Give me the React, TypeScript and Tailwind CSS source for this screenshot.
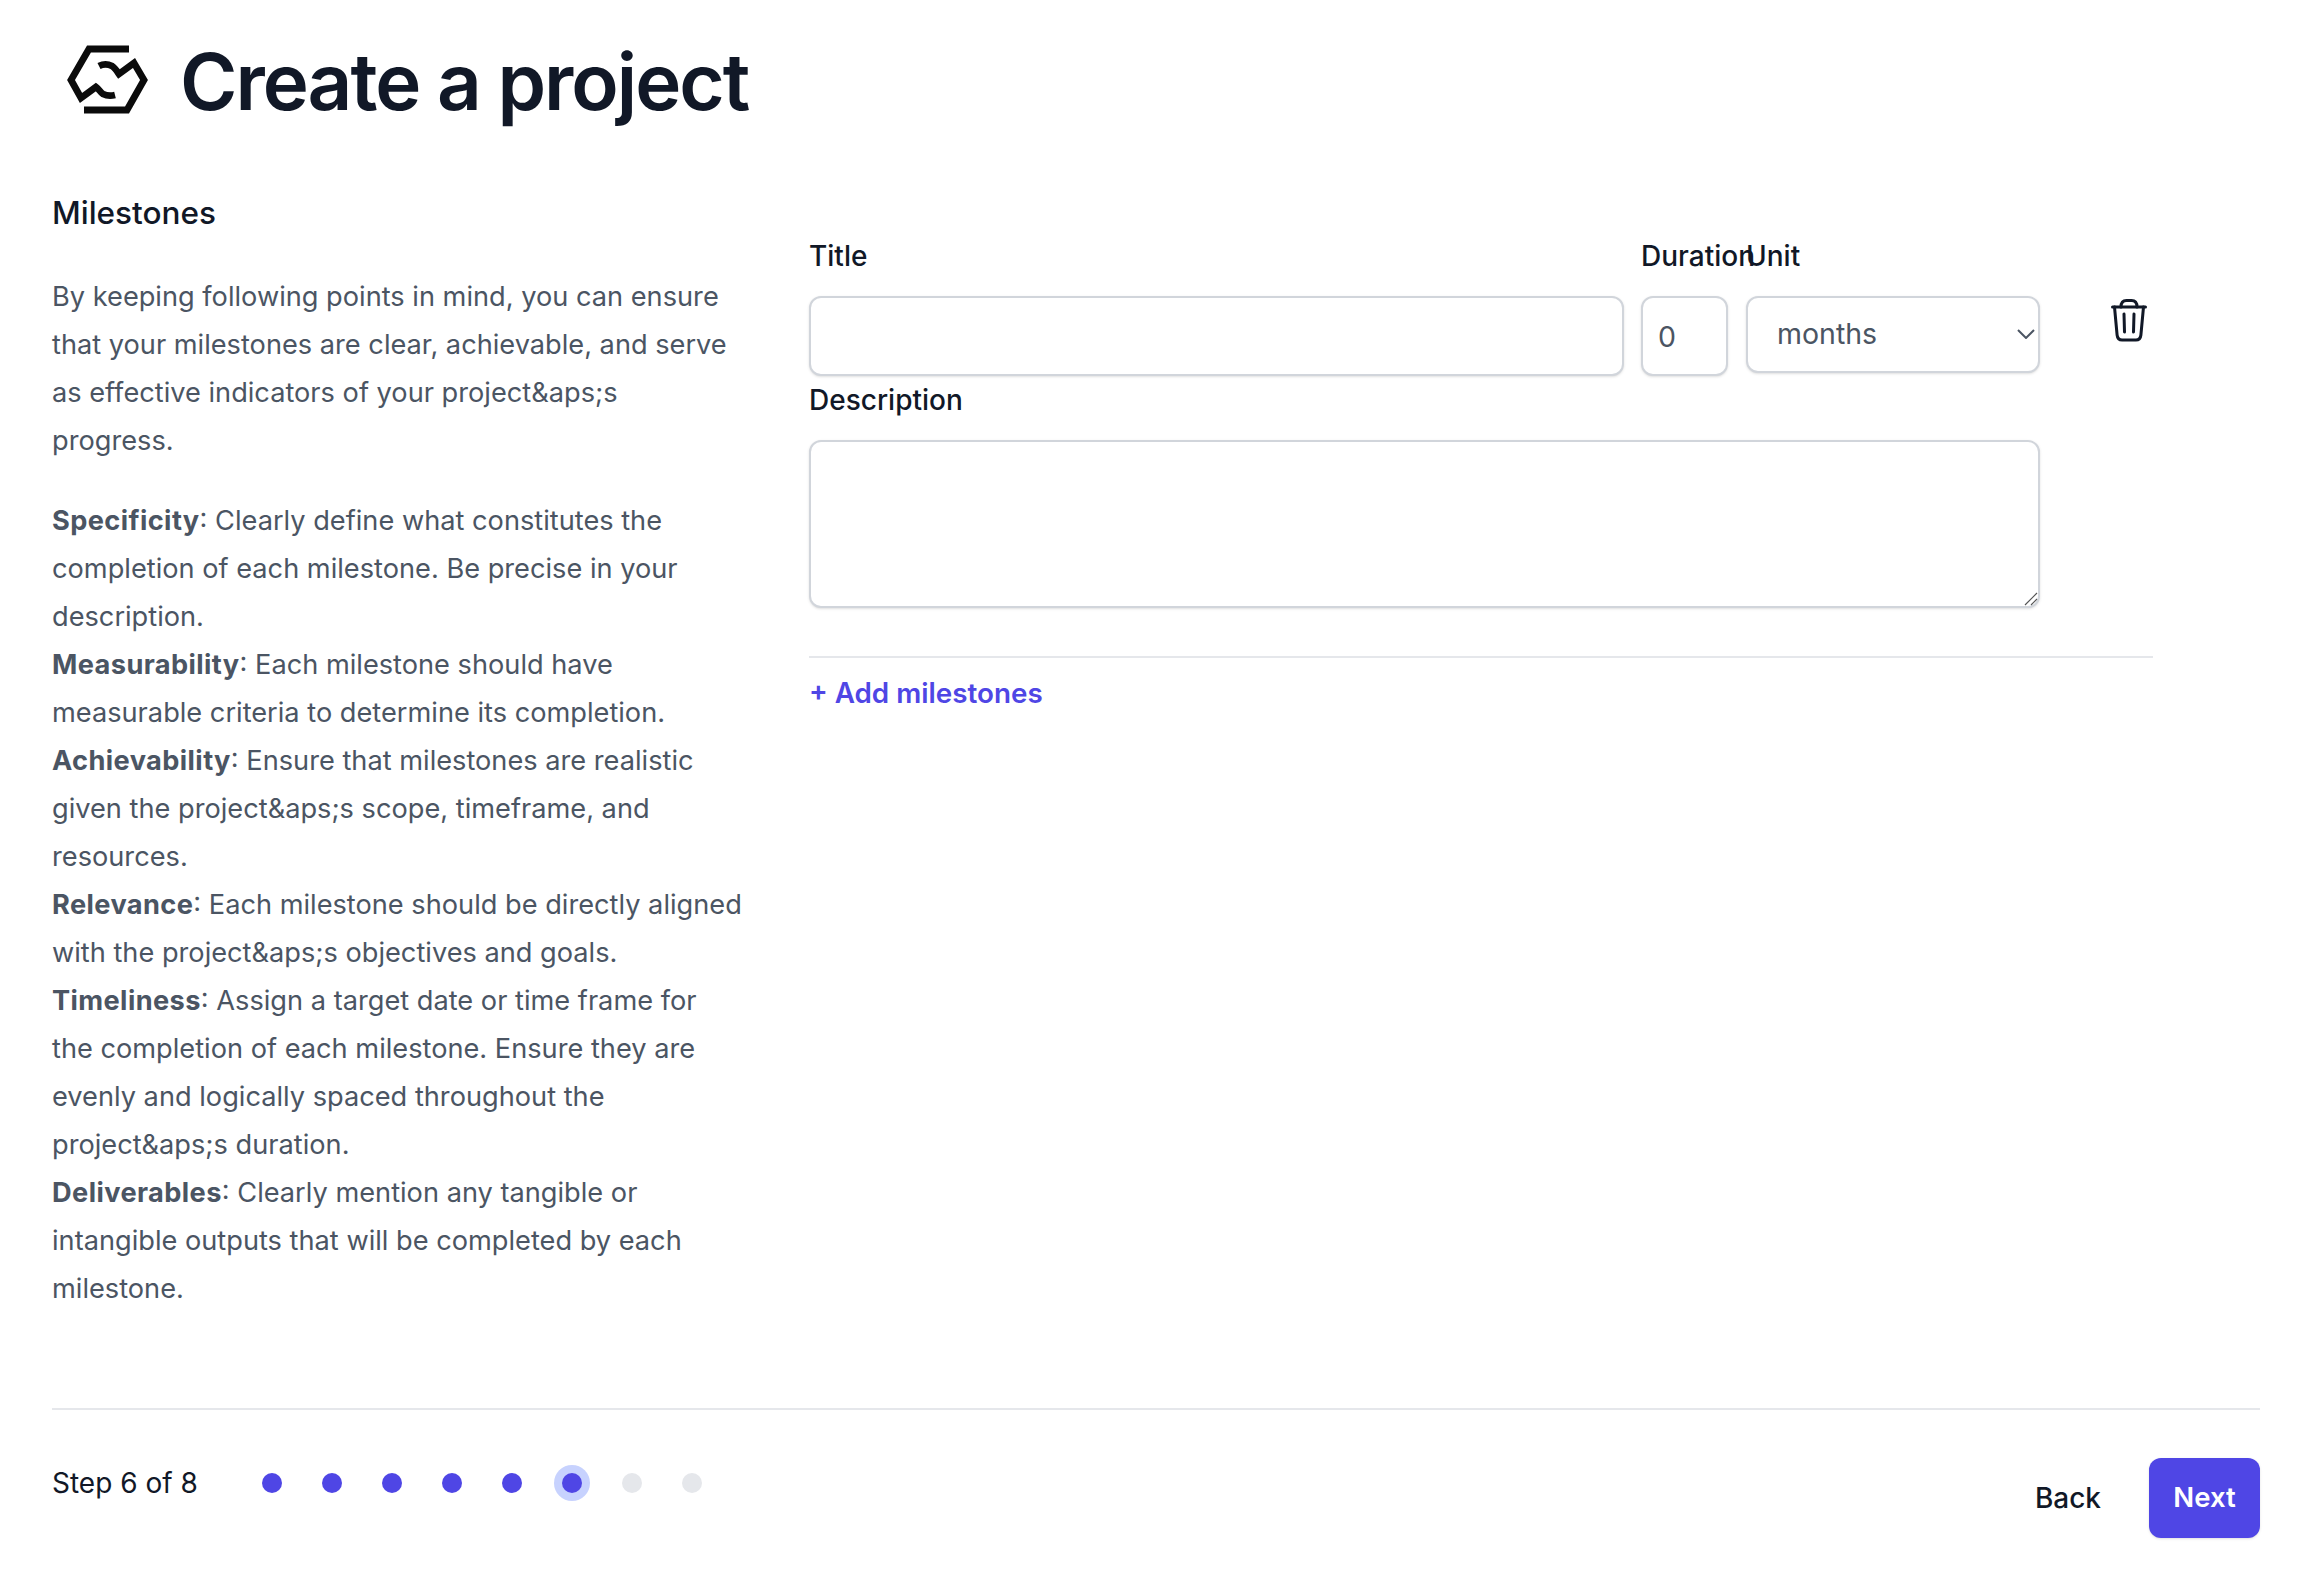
const font = { fontFamily: 'Inter, sans-serif' }

function Logo() {
  return (
    <svg viewBox="0 0 120 100" className="w-[120px] h-[100px] shrink-0">
      <g fill="none" stroke="#0b0b0b" strokeWidth="6.8">
        <path d="M80 24H40L22 55l10 18 15-11c3 2 4 5 7 7 4 2 8 2 12 1" />
        <path d="M50 41c4-2 9-2 13 0 3 2 5 5 7 8l15-11 10 17-17 30H35" />
      </g>
    </svg>
  )
}

function TrashIcon() {
  return (
    <svg viewBox="0 0 36 43" fill="none" stroke="#111827" strokeWidth="3" strokeLinecap="round" strokeLinejoin="round" className="w-[36px] h-[43px]">
      <path d="M1.5 8h33" />
      <path d="M3.5 8l2.6 28c.3 3 2 5 5 5h13.800c3 0 4.700-2 5-5l2.600-28" />
      <path d="M10 8c0-4 2-6.500 5.500-6.500h5c3.500 0 5.500 2.500 5.500 6.500" />
      <path d="M13 15l.5 18M23 15l-.5 18" />
    </svg>
  )
}

function Dot({ state }: { state: 'done' | 'current' | 'todo' }) {
  if (state === 'current') {
    return (
      <div className="w-5 h-5 rounded-full bg-[#4f46e5] ring-8 ring-[#c7d2fe]" />
    )
  }
  return (
    <div className={state === 'done' ? 'w-5 h-5 rounded-full bg-[#4f46e5]' : 'w-5 h-5 rounded-full bg-[#e5e7eb]'} />
  )
}

export default function App() {
  const inputCls =
    'block h-[80px] rounded-[12px] border-2 border-[#d1d5db] bg-white shadow-sm outline-none text-[28.5px] text-[#4b5563]'
  const boldCls = 'font-bold tracking-[0.4px]'

  return (
    <div style={font} className="w-[2308px] h-[1578px] bg-white text-[#111827] flex flex-col overflow-hidden">
      <header className="flex items-center h-[120px] pl-[49px] pt-[30px] gap-[11px]">
        <Logo />
        <h1 className="text-[78px] font-semibold leading-none tracking-[-2px] mt-[14px]">Create a project</h1>
      </header>

      <main className="flex flex-1 pl-[52px] pt-[72px]">
        <aside className="w-[694px] shrink-0">
          <h2 className="text-[31.5px] font-medium leading-[42px]">Milestones</h2>
          <div className="mt-[39px] text-[27.2px] leading-[48px] text-[#4b5563]">
            <p className="mb-[32px]">
              By keeping following points in mind, you can ensure that your milestones are clear, achievable, and serve as effective indicators of your project&amp;aps;s progress.
            </p>
            <p><b className={boldCls}>Specificity</b>: Clearly define what constitutes the completion of each milestone. Be precise in your description.</p>
            <p><b className={boldCls}>Measurability</b>: Each milestone should have measurable criteria to determine its completion.</p>
            <p><b className={boldCls}>Achievability</b>: Ensure that milestones are realistic given the project&amp;aps;s scope, timeframe, and resources.</p>
            <p><b className={boldCls}>Relevance</b>: Each milestone should be directly aligned with the project&amp;aps;s objectives and goals.</p>
            <p><b className={boldCls}>Timeliness</b>: Assign a target date or time frame for<br />the completion of each milestone. Ensure they are evenly and logically spaced throughout the project&amp;aps;s duration.</p>
            <p><b className={boldCls}>Deliverables</b>: Clearly mention any tangible or intangible outputs that will be completed by each milestone.</p>
          </div>
        </aside>

        <section className="w-[1344px] ml-[63px] pt-[46px]">
          <div className="flex border-b-2 border-[#e5e7eb] pb-[48px]">
            <div className="w-[1231px] shrink-0 text-[28px] font-medium">
              <div className="flex">
                <label className="w-[815px] mr-[17px]">
                  <div className="leading-[36px] mb-[22px]">Title</div>
                  <input className={`${inputCls} w-full`} />
                </label>
                <label className="w-[87px] mr-[18px]">
                  <div className="leading-[36px] mb-[22px] whitespace-nowrap">Duration</div>
                  <input className={`${inputCls} w-full px-[15px] font-normal`} defaultValue="0" />
                </label>
                <label className="w-[294px]">
                  <div className="leading-[36px] mb-[22px]">Unit</div>
                  <div className="relative">
                    <select className={`${inputCls} !h-[77px] w-full appearance-none pl-[29px] font-normal shadow-none`} defaultValue="months">
                      <option>months</option>
                    </select>
                    <svg viewBox="0 0 18 10" className="absolute right-[5px] top-[33px] w-[18px] h-[10px]" fill="none" stroke="#4b5563" strokeWidth="2">
                      <path d="M1 1l8 8 8-8" />
                    </svg>
                  </div>
                </label>
              </div>
              <label className="block mt-[6px]">
                <div className="leading-[36px] mb-[22px]">Description</div>
                <div className="relative">
                  <textarea className="block w-full h-[168px] rounded-[12px] border-2 border-[#d1d5db] bg-white shadow-sm outline-none resize-none" />
                  <svg viewBox="0 0 14 14" className="absolute right-[2px] bottom-[2px] w-[14px] h-[14px]" stroke="#555" strokeWidth="1.2">
                    <path d="M1 13L13 1M7 13l6-6" />
                  </svg>
                </div>
              </label>
            </div>
            <div className="ml-[71px] pt-[61px]">
              <TrashIcon />
            </div>
          </div>
          <button className="mt-[17px] text-[27.8px] font-semibold leading-[36px] text-[#4f46e5]">+ Add milestones</button>
        </section>
      </main>

      <footer className="ml-[52px] mr-[48px] h-[170px] border-t-2 border-[#e5e7eb] flex justify-between">
        <div className="flex items-center gap-[62px] h-[146px]">
          <span className="text-[28px] w-[148px] whitespace-nowrap">Step 6 of 8</span>
          <div className="flex gap-[40px]">
            <Dot state="done" />
            <Dot state="done" />
            <Dot state="done" />
            <Dot state="done" />
            <Dot state="done" />
            <Dot state="current" />
            <Dot state="todo" />
            <Dot state="todo" />
          </div>
        </div>
        <div className="flex items-start pt-[48px] gap-[48px]">
          <button className="h-[80px] text-[28px] font-medium">Back</button>
          <button className="w-[111px] h-[80px] rounded-[12px] bg-[#4f46e5] text-white text-[27.5px] font-semibold shadow-sm">Next</button>
        </div>
      </footer>
    </div>
  )
}
